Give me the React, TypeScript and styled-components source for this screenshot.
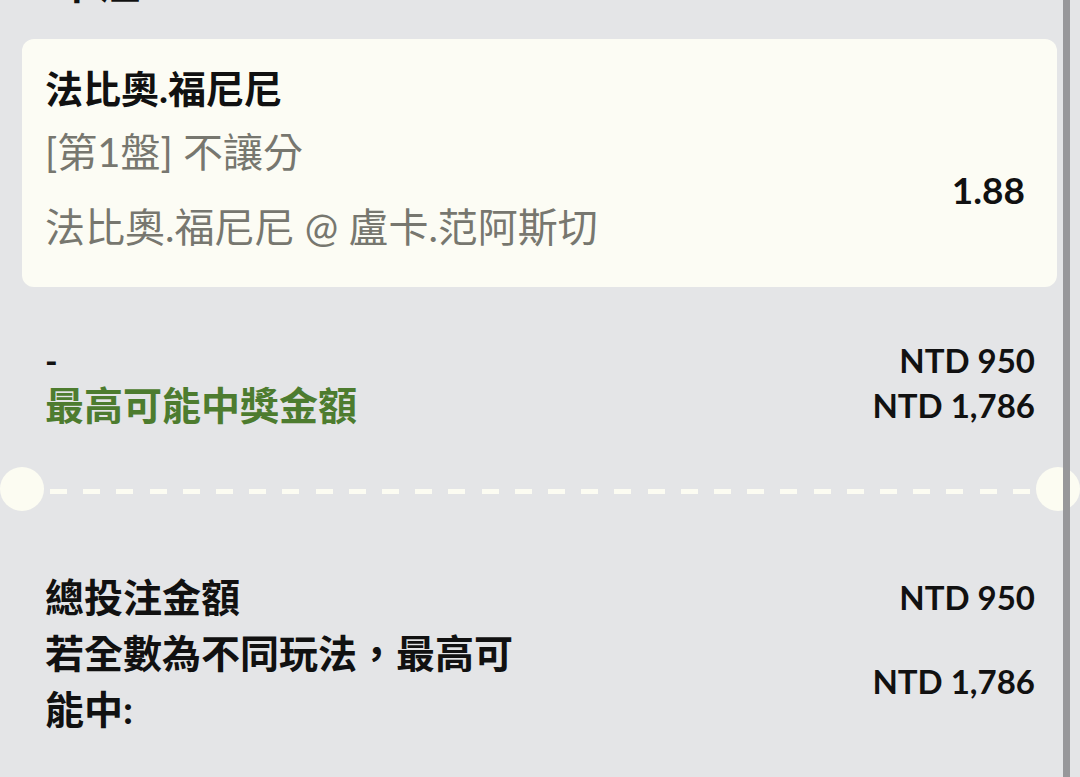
import React from 'react';
import styled, { createGlobalStyle } from 'styled-components';

const GlobalStyle = createGlobalStyle`
  html, body {
    margin: 0;
    padding: 0;
    background: #e4e5e7;
  }
  body {
    font-family: Lato, "Noto Sans CJK TC", sans-serif;
    color: #111111;
    overflow: hidden;
  }
`;

const Page = styled.div`
  position: relative;
  width: 1080px;
  height: 777px;
  overflow: hidden;
  background: #e4e5e7;
`;

const Heading = styled.div`
  margin-top: -39px;
  padding-left: 56px;
  height: 44px;
  line-height: 44px;
  font-size: 42px;
  font-weight: 700;
`;

const Card = styled.div`
  margin: 34px 23px 0 22px;
  padding: 17px 32px 28px 23px;
  background: #fcfcf4;
  border-radius: 12px;
`;

const Title = styled.div`
  font-size: 38px;
  line-height: 64px;
  font-weight: 700;
  color: #111111;
`;

const CardBody = styled.div`
  display: flex;
  align-items: center;
  justify-content: space-between;
`;

const Muted = styled.div<{ gap?: number }>`
  margin-top: ${p => p.gap || 0}px;
  font-size: 40px;
  line-height: 64px;
  color: #77776f;
`;

const Odds = styled.div`
  font-size: 37px;
  font-weight: 700;
  color: #111111;
`;

const Section = styled.div<{ top: number; lh: number }>`
  padding: ${p => p.top}px 45px 0 45px;
  line-height: ${p => p.lh}px;
`;

const Row = styled.div`
  display: flex;
  align-items: center;
  justify-content: space-between;
`;

const Label = styled.div<{ green?: boolean }>`
  max-width: 475px;
  font-size: 39px;
  font-weight: 700;
  color: ${p => (p.green ? '#4d7c2f' : '#111111')};
`;

const Dash = styled.div`
  font-size: 34px;
  font-weight: 700;
`;

const Amount = styled.div`
  font-size: 33px;
  font-weight: 700;
  white-space: nowrap;
  color: #111111;
`;

const Divider = styled.div`
  display: flex;
  align-items: center;
  margin-top: 39px;
  height: 44px;
`;

const Notch = styled.div`
  flex: 0 0 44px;
  height: 44px;
  border-radius: 50%;
  background: #fcfcf2;
`;

const DashLine = styled.div`
  flex: 1;
  display: flex;
  justify-content: space-between;
  margin: 5px 6px 0 6px;
`;

const DashBit = styled.span`
  width: 17px;
  height: 5px;
  background: #fcfcf2;
`;

const ScrollBar = styled.div`
  position: absolute;
  top: 0;
  bottom: 0;
  left: 1063px;
  width: 7px;
  background: #97979a;
`;

export default function App() {
  const dashes = Array.from({ length: 30 }, (_, i) => i);
  return (
    <Page>
      <GlobalStyle />
      <Heading>單注</Heading>

      <Card>
        <Title>法比奧.福尼尼</Title>
        <CardBody>
          <div>
            <Muted>[第1盤] 不讓分</Muted>
            <Muted gap={11}>法比奧.福尼尼 @ 盧卡.范阿斯切</Muted>
          </div>
          <Odds>1.88</Odds>
        </CardBody>
      </Card>

      <Section top={51} lh={45}>
        <Row>
          <Dash>-</Dash>
          <Amount>NTD 950</Amount>
        </Row>
        <Row>
          <Label green>最高可能中獎金額</Label>
          <Amount>NTD 1,786</Amount>
        </Row>
      </Section>

      <Divider>
        <Notch />
        <DashLine>
          {dashes.map(i => (
            <DashBit key={i} />
          ))}
        </DashLine>
        <Notch />
      </Divider>

      <Section top={58} lh={56}>
        <Row>
          <Label>總投注金額</Label>
          <Amount>NTD 950</Amount>
        </Row>
        <Row>
          <Label>若全數為不同玩法，最高可能中:</Label>
          <Amount>NTD 1,786</Amount>
        </Row>
      </Section>

      <ScrollBar />
    </Page>
  );
}
